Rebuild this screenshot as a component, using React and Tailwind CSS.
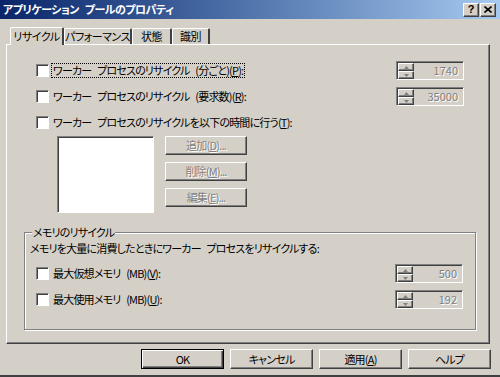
import React from "react";

/* ---------------- Win classic 3D edges ---------------- */
const RAISED =
  "border border-t-white border-l-white border-r-[#404040] border-b-[#404040] shadow-[inset_-1px_-1px_0_#808080]";
const SUNKEN =
  "border border-t-[#808080] border-l-[#808080] border-r-white border-b-white shadow-[inset_1px_1px_0_#404040]";
const DISABLED = "text-[#808080] [text-shadow:1px_1px_0_#fff]";

const Check = () => <span className={`w-[13px] h-[13px] bg-white shrink-0 ${SUNKEN}`} />;

const Arrow = ({ up }) => (
  <svg width="5" height="3" viewBox="0 0 5 3">
    <path d={up ? "M2.5 0 L5 3 L0 3 Z" : "M0 0 L5 0 L2.5 3 Z"} fill="#808080" />
  </svg>
);

const Spin = ({ value }) => (
  <div className={`w-[68px] h-[19px] bg-[#d4d0c8] flex items-center ${SUNKEN}`}>
    <div className="flex flex-col ml-[1px] mt-[1px]">
      <span className={`w-[16px] h-[8px] bg-[#d4d0c8] flex items-center justify-center ${RAISED}`}>
        <Arrow up />
      </span>
      <span className={`w-[16px] h-[8px] bg-[#d4d0c8] flex items-center justify-center ${RAISED}`}>
        <Arrow />
      </span>
    </div>
    <span className={`flex-1 text-right pr-[5px] leading-none tracking-normal ${DISABLED}`}>{value}</span>
  </div>
);

const Row = ({ label, spin, focus }) => (
  <div className="flex items-center justify-between h-[19px]">
    <div className="flex items-center">
      <Check />
      <span
        className={`ml-[3px] px-[1px] leading-[13px] whitespace-nowrap ${
          focus ? "outline outline-1 outline-dotted outline-black" : ""
        }`}
      >
        {label}
      </span>
    </div>
    {spin && <Spin value={spin} />}
  </div>
);

const SideBtn = ({ children }) => (
  <div className={`w-[82px] h-[19px] flex items-center justify-center whitespace-nowrap ${RAISED} ${DISABLED}`}>
    {children}
  </div>
);

const DlgBtn = ({ children, def }) => (
  <div
    className={`w-[83px] h-[20px] flex items-center justify-center whitespace-nowrap ${
      def
        ? "border border-black shadow-[inset_1px_1px_0_#fff,inset_-1px_-1px_0_#404040,inset_-2px_-2px_0_#808080]"
        : RAISED
    }`}
  >
    {children}
  </div>
);

const Tab = ({ children, active, w }) => (
  <div
    className={`${w} shrink-0 whitespace-nowrap flex items-center justify-center border-t border-l border-t-white border-l-white border-r-2 border-r-[#404040] rounded-t-[2px] ${
      active ? "h-[18px] bg-[#d4d0c8] relative -mb-[1px] z-10" : "h-[16px]"
    }`}
  >
    {children}
  </div>
);

export default function App() {
  return (
    <div className="w-[500px] h-[377px] bg-[#d4d0c8] text-black text-[11px] tracking-[-0.8px] [word-spacing:4px] font-['Noto_Sans_CJK_JP',sans-serif] [font-feature-settings:'palt'] flex flex-col border-b-2 border-b-[#404040] overflow-hidden">
      {/* title bar */}
      <div className="h-[19px] shrink-0 flex items-center justify-between bg-gradient-to-r from-[#0a246a] to-[#a6caf0] pl-[3px] pr-[4px]">
        <span className="text-white font-bold text-[11px] leading-none tracking-[-0.5px]">
          アプリケーション プールのプロパティ
        </span>
        <div className="flex">
          <span
            className={`w-[16px] h-[14px] bg-[#d4d0c8] flex items-center justify-center font-bold text-[11px] leading-none tracking-normal font-['Liberation_Sans',sans-serif] ${RAISED}`}
          >
            ?
          </span>
          <span className={`w-[16px] h-[14px] ml-[1px] bg-[#d4d0c8] flex items-center justify-center ${RAISED}`}>
            <svg width="8" height="7" viewBox="0 0 8 7">
              <path d="M0.5 0.5 L7.5 6.5 M7.5 0.5 L0.5 6.5" stroke="#000" strokeWidth="1.6" />
            </svg>
          </span>
        </div>
      </div>

      {/* tabs */}
      <div className="flex items-end pl-[10px] mt-[7px] h-[18px] shrink-0 tracking-[-0.5px]">
        <Tab active w="w-[54px]">
          リサイクル
        </Tab>
        <Tab w="w-[68px]">パフォーマンス</Tab>
        <Tab w="w-[40px]">状態</Tab>
        <Tab w="w-[38px]">識別</Tab>
      </div>

      {/* tab panel */}
      <div className="ml-[6px] w-[484px] h-[300px] shrink-0 border border-t-white border-l-white border-r-[#404040] border-b-[#404040] shadow-[inset_-1px_-1px_0_#808080] pl-[17px] pr-[13px] pt-[16px]">
        <div className="pl-[12px] pr-[12px] flex flex-col">
          <Row
            focus
            label={
              <>
                ワーカー プロセスのリサイクル (分ごと)(<span className="underline">P</span>):
              </>
            }
            spin="1740"
          />
          <div className="mt-[7px]">
            <Row
              label={
                <>
                  ワーカー プロセスのリサイクル (要求数)(<span className="underline">R</span>):
                </>
              }
              spin="35000"
            />
          </div>
          <div className="mt-[7px]">
            <Row
              label={
                <>
                  ワーカー プロセスのリサイクルを以下の時間に行う(<span className="underline">T</span>):
                </>
              }
            />
          </div>
          <div className="flex mt-[4px] pl-[21px]">
            <div className={`w-[97px] h-[77px] bg-white ${SUNKEN}`} />
            <div className="flex flex-col ml-[11px] gap-[7px]">
              <SideBtn>
                追加(<span className="underline">D</span>)...
              </SideBtn>
              <SideBtn>
                削除(<span className="underline">M</span>)...
              </SideBtn>
              <SideBtn>
                編集(<span className="underline">E</span>)...
              </SideBtn>
            </div>
          </div>
        </div>

        {/* memory group */}
        <div className="relative mt-[19px] h-[98px] border border-[#808080] shadow-[inset_1px_1px_0_#fff,1px_1px_0_#fff] pl-[5px] pr-[12px] pt-[9px]">
          <span className="absolute -top-[7px] left-[7px] bg-[#d4d0c8] px-[1px] leading-[13px]">メモリのリサイクル</span>
          <div className="leading-[13px] whitespace-nowrap">
            メモリを大量に消費したときにワーカー プロセスをリサイクルする:
          </div>
          <div className="pl-[6px] mt-[9px] flex flex-col gap-[7px]">
            <Row
              label={
                <>
                  最大仮想メモリ (MB)(<span className="underline">V</span>):
                </>
              }
              spin="500"
            />
            <Row
              label={
                <>
                  最大使用メモリ (MB)(<span className="underline">U</span>):
                </>
              }
              spin="192"
            />
          </div>
        </div>
      </div>

      {/* dialog buttons */}
      <div className="flex justify-end gap-[6px] pr-[9px] mt-[5px]">
        <DlgBtn def>OK</DlgBtn>
        <DlgBtn>キャンセル</DlgBtn>
        <DlgBtn>
          適用(<span className="underline">A</span>)
        </DlgBtn>
        <DlgBtn>ヘルプ</DlgBtn>
      </div>
    </div>
  );
}
